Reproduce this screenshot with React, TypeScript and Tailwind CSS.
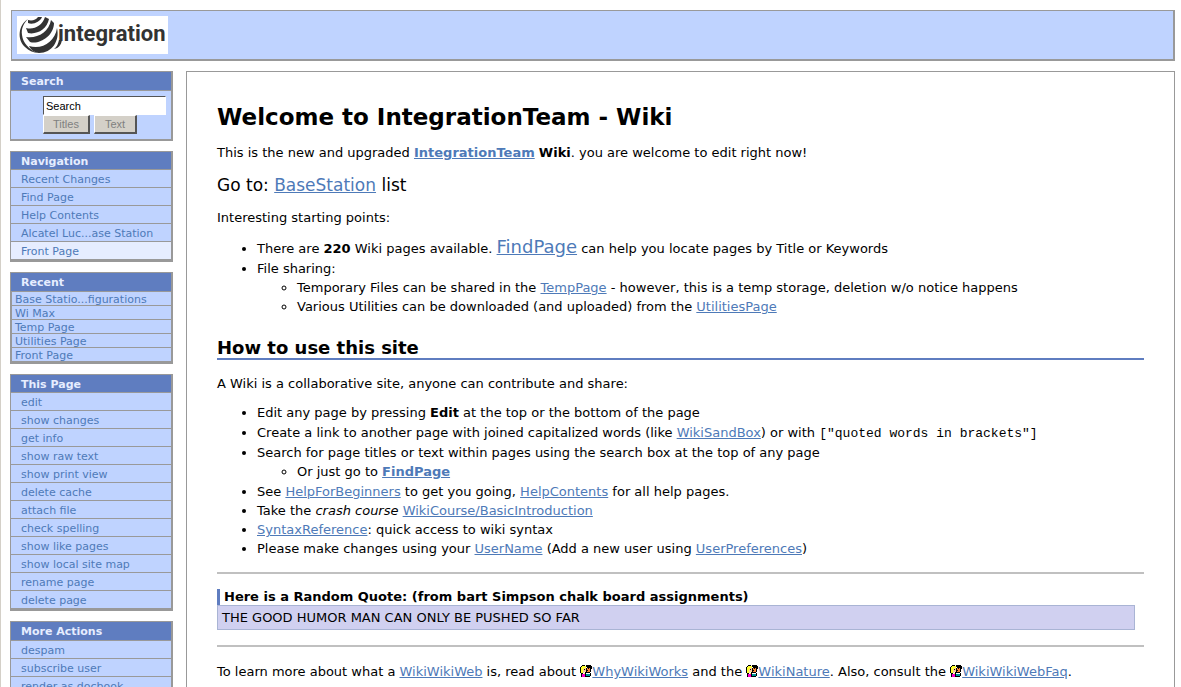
import type { ReactNode } from 'react';

const NAV_LINKS = ['Recent Changes', 'Find Page', 'Help Contents', 'Alcatel Luc...ase Station', 'Front Page'];

const RECENT_LINKS = ['Base Statio...figurations', 'Wi Max', 'Temp Page', 'Utilities Page', 'Front Page'];

const PAGE_ACTIONS = [
  'edit',
  'show changes',
  'get info',
  'show raw text',
  'show print view',
  'delete cache',
  'attach file',
  'check spelling',
  'show like pages',
  'show local site map',
  'rename page',
  'delete page',
];

const MORE_ACTIONS = ['despam', 'subscribe user', 'render as docbook'];

function Logo() {
  return (
    <svg viewBox="0 0 151 38" className="h-[38px] w-[151px] bg-white" role="img" aria-label="integration">
      <g fill="#333">
        {/* thin rim on the left, then the bands from top to bottom */}
        <path d="M11 3C1 9 0 24 8 31C12 35 16 36 20 37C12 33 6 27 5 19C4 12 7 7 11 3Z" />
        <path d="M11 4C15 5 19 4 21 1L25 1C23 6 16 9 11 7Z" />
        <path d="M9 12C17 14 25 10 28 1L32 3C30 13 20 19 11 17Z" />
        <path d="M9 21C20 23 32 16 34 4L37 7C37 20 22 29 13 26Z" />
        <path d="M12 30C25 34 38 26 40 12C43 25 35 37 22 37C18 37 14 34 12 30Z" />
        <path d="M42 24L45 24C44 29 42 32 37 33C40 31 41 28 42 24Z" />
      </g>
      <text x="41" y="25" fill="#333" className="font-['Roboto'] text-[22px] font-bold">
        integration
      </text>
    </svg>
  );
}

function InterWikiIcon() {
  return (
    <svg viewBox="0 0 12 12" className="inline-block h-3 w-3 align-[-1px]" shapeRendering="crispEdges" aria-hidden="true">
      <path fill="#000" d="M2 0h3v1H2zM6 0h5v1h1v3h-1v3h-1v1H5V7h1V3h1V2H6zM1 1h1v1H1zM0 2h1v6H0zM1 8h2v1H1zM1 9h1v3H1zM5 8h1v4H5zM10 8h1v3h-1zM6 11h4v1H6z" />
      <path fill="#ff3" d="M2 1h4v2H4v1H3v4H1V2h1zM4 8h1v1H4z" />
      <path fill="#fc9" d="M4 3h2v4H4v1H3V4h1z" />
      <path fill="#000" d="M4 4h1v1H4z" />
      <path fill="#f83" d="M7 3h3v4H7z" />
      <path fill="#000" d="M8 3h1v1H8zM7 5h1v1H7z" />
      <path fill="#f0c" d="M2 9h3v3H2z" />
      <path fill="#099" d="M6 9h4v2H6z" />
    </svg>
  );
}

function WikiLink({ children, className = '' }: { children: ReactNode; className?: string }) {
  return (
    <a href="#" className={`text-[#4e7ab8] underline ${className}`}>
      {children}
    </a>
  );
}

function Panel({ title, tall = false, children }: { title: string; tall?: boolean; children: ReactNode }) {
  return (
    <section className="border border-r-2 border-b-2 border-[#999] bg-[#bfd3ff] text-[11px] text-[#4e7ab8]">
      <h2
        className={`border-b border-[#999] bg-[#5f7dc0] pl-[10px] leading-[19px] font-bold text-[#e6edff] ${tall ? 'h-[19px]' : 'h-[18px]'}`}
      >
        {title}
      </h2>
      {children}
    </section>
  );
}

interface LinkPanelProps {
  title: string;
  links: string[];
  current?: string;
  tall?: boolean;
}

function LinkPanel({ title, links, current, tall }: LinkPanelProps) {
  return (
    <Panel title={title} tall={tall}>
      <ul>
        {links.map((link) => (
          <li key={link} className="border-b border-[#999]">
            <a
              href="#"
              className={`block h-[17px] pl-[10px] leading-[19px] whitespace-nowrap ${link === current ? 'bg-[#e6edff]' : ''}`}
            >
              {link}
            </a>
          </li>
        ))}
      </ul>
    </Panel>
  );
}

function SearchPanel() {
  const buttonClass =
    'h-[19px] border border-r-2 border-b-2 border-t-white border-l-white border-r-[#555] border-b-[#555] bg-[#d4d0c8] text-[11px] leading-none text-[#808080]';

  return (
    <Panel title="Search" tall>
      <form className="h-12 pt-[5px] pl-8 font-['Liberation_Sans',sans-serif]" onSubmit={(e) => e.preventDefault()}>
        <input
          type="text"
          aria-label="Search"
          defaultValue="Search"
          className="block h-[19px] w-[123px] border border-t-[#555] border-r-white border-b-white border-l-[#555] bg-white px-[2px] text-[11px] text-black"
        />
        <div className="flex gap-1">
          <button type="submit" className={`w-[47px] ${buttonClass}`}>
            Titles
          </button>
          <button type="submit" className={`w-[43px] ${buttonClass}`}>
            Text
          </button>
        </div>
      </form>
    </Panel>
  );
}

function Article() {
  return (
    <main className="min-w-0 flex-1 border border-[#999] px-[30px] pt-[31px] text-[13px] leading-5 text-black">
      <h1 className="text-[23px] leading-7 font-bold">Welcome to IntegrationTeam - Wiki</h1>
      <p className="mt-3">
        This is the new and upgraded <WikiLink className="font-bold">IntegrationTeam</WikiLink> <b>Wiki</b>. you are
        welcome to edit right now!
      </p>
      <p className="mt-[10px] text-[17px] leading-6">
        Go to: <WikiLink>BaseStation</WikiLink> list
      </p>
      <p className="mt-[11px]">Interesting starting points:</p>

      <ul className="mt-[10px] list-disc pl-10 leading-[19px]">
        <li className="mb-px">
          There are <b>220</b> Wiki pages available. <WikiLink className="text-[18px] leading-none">FindPage</WikiLink>{' '}
          can help you locate pages by Title or Keywords
        </li>
        <li>
          File sharing:
          <ul className="list-[circle] pl-10">
            <li>
              Temporary Files can be shared in the <WikiLink>TempPage</WikiLink> - however, this is a temp storage,
              deletion w/o notice happens
            </li>
            <li>
              Various Utilities can be downloaded (and uploaded) from the <WikiLink>UtilitiesPage</WikiLink>
            </li>
          </ul>
        </li>
      </ul>

      <h2 className="mt-[22px] border-b-2 border-[#5f7dc0] text-[18px] leading-5 font-bold">How to use this site</h2>
      <p className="mt-[14px]">A Wiki is a collaborative site, anyone can contribute and share:</p>

      <ul className="mt-[9px] list-disc pl-10 leading-[19px]">
        <li className="mb-px">
          Edit any page by pressing <b>Edit</b> at the top or the bottom of the page
        </li>
        <li className="mb-px">
          Create a link to another page with joined capitalized words (like <WikiLink>WikiSandBox</WikiLink>) or with{' '}
          <code className="font-['Liberation_Mono',monospace] text-[13px] leading-none">
            ["quoted words in brackets"]
          </code>
        </li>
        <li className="mb-px">
          Search for page titles or text within pages using the search box at the top of any page
          <ul className="list-[circle] pl-10">
            <li>
              Or just go to <WikiLink className="font-bold">FindPage</WikiLink>
            </li>
          </ul>
        </li>
        <li>
          See <WikiLink>HelpForBeginners</WikiLink> to get you going, <WikiLink>HelpContents</WikiLink> for all help
          pages.
        </li>
        <li>
          Take the <em>crash course</em> <WikiLink>WikiCourse/BasicIntroduction</WikiLink>
        </li>
        <li>
          <WikiLink>SyntaxReference</WikiLink>: quick access to wiki syntax
        </li>
        <li>
          Please make changes using your <WikiLink>UserName</WikiLink> (Add a new user using{' '}
          <WikiLink>UserPreferences</WikiLink>)
        </li>
      </ul>

      <hr className="mt-[14px] border-t-2 border-[#c0c0c0]" />
      <h3 className="mt-[15px] border-l-[3px] border-[#5f7dc0] pl-1 leading-4 font-bold">
        Here is a Random Quote: (from bart Simpson chalk board assignments)
      </h3>
      <p className="mr-[9px] border border-[#a9b4d4] bg-[#d0d0f0] px-1 leading-[23px]">
        THE GOOD HUMOR MAN CAN ONLY BE PUSHED SO FAR
      </p>
      <hr className="mt-[15px] border-t-2 border-[#c0c0c0]" />

      <p className="mt-[15px] pb-6">
        To learn more about what a <WikiLink>WikiWikiWeb</WikiLink> is, read about <InterWikiIcon />
        <WikiLink>WhyWikiWorks</WikiLink> and the <InterWikiIcon />
        <WikiLink>WikiNature</WikiLink>. Also, consult the <InterWikiIcon />
        <WikiLink>WikiWikiWebFaq</WikiLink>.
      </p>
    </main>
  );
}

export default function App() {
  return (
    <div className="h-screen overflow-hidden border-l border-[#d4d0c8] bg-white pt-[10px] pr-[6px] font-['DejaVu_Sans',sans-serif]">
      <header className="ml-[10px] border border-r-2 border-b-2 border-[#999] bg-[#bfd3ff] py-[5px] pl-[5px]">
        <Logo />
      </header>

      <div className="mt-[10px] ml-[9px] flex gap-[13px]">
        <aside className="flex w-[163px] shrink-0 flex-col gap-[10px]">
          <SearchPanel />
          <LinkPanel title="Navigation" links={NAV_LINKS} current="Front Page" />
          <Panel title="Recent" tall>
            <ul className="border-l border-[#999]">
              {RECENT_LINKS.map((link) => (
                <li key={link} className="border-b border-[#999]">
                  <a href="#" className="block h-[13px] pl-[3px] leading-[15px] whitespace-nowrap">
                    {link}
                  </a>
                </li>
              ))}
            </ul>
          </Panel>
          <LinkPanel title="This Page" links={PAGE_ACTIONS} />
          <LinkPanel title="More Actions" links={MORE_ACTIONS} tall />
        </aside>
        <Article />
      </div>
    </div>
  );
}
